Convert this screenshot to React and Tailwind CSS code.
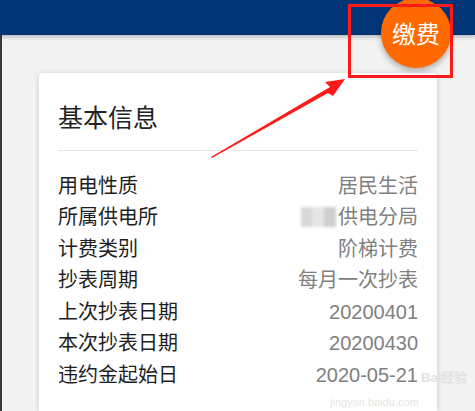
import React from 'react';

const rows = [
  ['用电性质', '居民生活'],
  ['所属供电所', '供电分局', true],
  ['计费类别', '阶梯计费'],
  ['抄表周期', '每月一次抄表'],
  ['上次抄表日期', '20200401'],
  ['本次抄表日期', '20200430'],
  ['违约金起始日', '2020-05-21'],
];

export default function App() {
  return (
    <div
      className="relative w-[475px] h-[411px] overflow-hidden bg-[#f3f3f3]"
      style={{ fontFamily: '"Liberation Sans", "Noto Sans CJK SC", sans-serif' }}
    >
      <div className="h-[35px] bg-[#033678] shadow-[0_2px_4px_rgba(0,0,0,0.25)] relative z-10" />

      <div className="flex border-l-2 border-[#3a3a3a] h-[376px]">
        <div className="ml-[37px] mt-[38px] w-[398px] bg-white rounded-t-[4px] shadow-[0_1px_6px_rgba(0,0,0,0.18)] px-[19px] pt-[29px]">
          <h2 className="text-[25px] leading-[32px] text-[#222] font-normal">基本信息</h2>
          <div className="mt-[16px] h-px bg-[#e6e6e6]" />
          <div className="mt-[19px] flex flex-col">
            {rows.map(([label, value, blurred]) => (
              <div key={label} className="flex justify-between items-center h-[31.5px] text-[20px]">
                <span className="text-[#1e1e1e]">{label}</span>
                <span className="flex items-center text-[#808080]">
                  {blurred && (
                    <span className="flex mr-[2px] blur-[1.5px]">
                      <span className="w-[11px] h-[20px] bg-[#d8d8d8]" />
                      <span className="w-[12px] h-[20px] bg-[#e6e6e6]" />
                      <span className="w-[12px] h-[20px] bg-[#cfcfcf]" />
                    </span>
                  )}
                  {value}
                </span>
              </div>
            ))}
          </div>
        </div>
      </div>

      <div className="absolute left-[421px] top-[368px] text-[13px] text-[#e2e2e2] font-bold">Bai经验</div>
      <div className="absolute left-[330px] top-[394px] text-[11px] text-[#e6e6e6]">jingyan.baidu.com</div>

      <div className="absolute left-[381px] top-[-2px] w-[70px] h-[70px] rounded-full bg-[#ff6a00] shadow-[0_3px_6px_rgba(0,0,0,0.3)] flex items-center justify-center z-20">
        <span className="text-white text-[24px] leading-none" style={{ fontFamily: '"Noto Sans CJK SC", sans-serif' }}>缴费</span>
      </div>

      <div className="absolute left-[348px] top-[4px] w-[105px] h-[74px] border-[3px] border-[#ff1a1a] z-30" />

      <svg className="absolute left-0 top-0 z-30" width="475" height="411" viewBox="0 0 475 411">
        <polygon points="212,158 328,93 333,96 345,79 325,82 330,87 211,157" fill="#ff1a1a" />
      </svg>
    </div>
  );
}
